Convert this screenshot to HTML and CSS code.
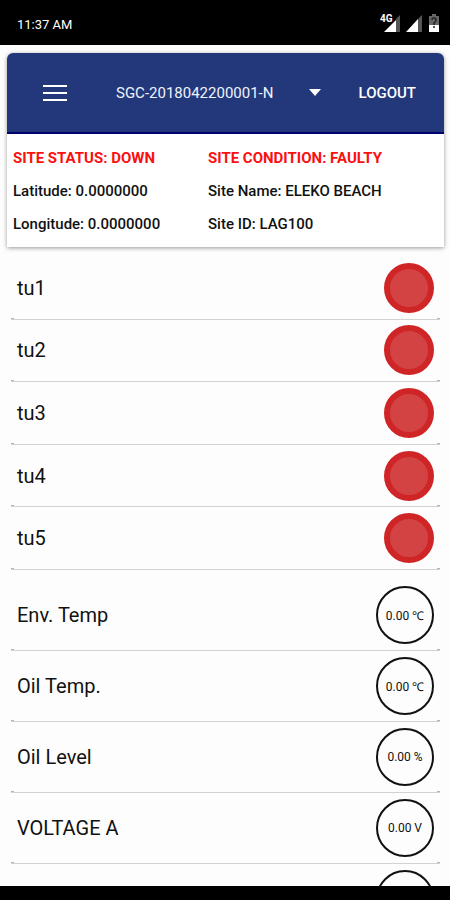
FILE: index.html
```html
<!DOCTYPE html>
<html lang="en">
<head>
    <meta charset="UTF-8">
    <meta name="viewport" content="width=device-width, initial-scale=1">
    <title>Site Monitor</title>
    <link rel="stylesheet" href="styles.css">
</head>
<body>

    <!-- status bar -->
    <div class="statusbar">
        <span class="clock">11:37 AM</span>
        <svg class="status-icons" width="62" height="22" viewBox="0 0 62 22" aria-hidden="true">
            <path d="M16 6L20 2V19H16Z" fill="#555"/>
            <path d="M4 19L16 7V19Z" fill="#fff"/>
            <text x="0" y="9" class="net">4G</text>
            <path d="M38 6L42 2V19H38Z" fill="#555"/>
            <path d="M26 19L38 6V19Z" fill="#fff"/>
            <path d="M49 3H52V1H56V3H59V13H49V3Z" fill="#666"/>
            <path d="M49 12H59V19H49Z" fill="#fff"/>
            <path d="M52 7Q52 5 54 5Q56 5 56 7Q56 8 54 10V12M54 13V15" fill="none" stroke="#222" stroke-width="1.5"/>
        </svg>
    </div>

    <!-- site card -->
    <header class="card">
        <div class="toolbar">
            <button type="button" class="menu" aria-label="Menu">
                <svg width="24" height="18" viewBox="0 0 24 18">
                    <path d="M0 2H24M0 9H24M0 16H24" stroke="#fff" stroke-width="2"/>
                </svg>
            </button>
            <div class="picker">
                <select class="site" aria-label="Site">
                    <option>SGC-2018042200001-N</option>
                </select>
                <svg class="arrow" width="12" height="7" viewBox="0 0 12 7" aria-hidden="true">
                    <path d="M0 0H12L6 7Z" fill="#fff"/>
                </svg>
            </div>
            <button type="button" class="logout">LOGOUT</button>
        </div>
        <div class="info">
            <span class="alert">SITE STATUS: DOWN</span>
            <span class="alert">SITE CONDITION: FAULTY</span>
            <span>Latitude: 0.0000000</span>
            <span>Site Name: ELEKO BEACH</span>
            <span>Longitude: 0.0000000</span>
            <span>Site ID: LAG100</span>
        </div>
    </header>

    <main class="content">
        <!-- on / off inputs -->
        <ul class="list inputs">
            <li>tu1 <span class="lamp"></span></li>
            <li>tu2 <span class="lamp"></span></li>
            <li>tu3 <span class="lamp"></span></li>
            <li>tu4 <span class="lamp"></span></li>
            <li>tu5 <span class="lamp"></span></li>
        </ul>

        <!-- measured values -->
        <ul class="list gauges">
            <li>Env. Temp <span class="gauge">0.00 ℃</span></li>
            <li>Oil Temp. <span class="gauge">0.00 ℃</span></li>
            <li>Oil Level <span class="gauge">0.00 %</span></li>
            <li>VOLTAGE A <span class="gauge">0.00 V</span></li>
            <li><span class="gauge"></span></li>
        </ul>
    </main>

    <div class="navbar"></div>

</body>
</html>
```
FILE: styles.css
```css
* {
    box-sizing: border-box;
}

body {
    margin: 0;
    height: 100vh;
    display: flex;
    flex-direction: column;
    overflow: hidden;
    background-color: #fdfdfd;
    color: #111;
    font-family: Roboto, "Liberation Sans", sans-serif;
}

/* status bar */
.statusbar {
    flex: none;
    height: 45px;
    padding: 3px 8px 0 17px;
    display: flex;
    align-items: center;
    justify-content: space-between;
    background-color: #000;
    color: #fff;
}
.clock {
    font-size: 13px;
}
.net {
    fill: #fff;
    font-size: 10px;
    font-weight: bold;
}

/* site card */
.card {
    flex: none;
    margin: 8px 6px 0 7px;
    border-radius: 6px 6px 0 0;
    background-color: #fff;
    box-shadow: 0 1px 4px rgba(0, 0, 0, 0.4);
}
.toolbar {
    height: 81px;
    padding: 0 28px 0 36px;
    display: flex;
    align-items: center;
    border-bottom: 2px solid #00006e;
    border-radius: 6px 6px 0 0;
    background-color: #22387b;
}
.toolbar button {
    padding: 0;
    border: 0;
    background: none;
    color: #fff;
    font-family: inherit;
}
.menu svg {
    display: block;
}
.picker {
    flex: 1;
    margin: 0 38px 0 49px;
    display: grid;
    align-items: center;
}
.site, .arrow {
    grid-area: 1 / 1;
}
.site {
    appearance: none;
    width: 100%;
    padding: 0;
    border: 0;
    background: none;
    color: #f0f3fc;
    font-family: inherit;
    font-size: 15px;
}
.arrow {
    justify-self: end;
    pointer-events: none;
}
.toolbar .logout {
    font-size: 15px;
    font-weight: 500;
}
.info {
    padding: 8px 6px 6px 6px;
    display: grid;
    grid-template-columns: 195px 1fr;
    font-size: 15px;
    font-weight: 500;
    line-height: 33px;
}
.alert {
    color: #fb1010;
    font-weight: bold;
}

/* lists */
.content {
    flex: 1;
    min-height: 0;
    padding: 10px 10px 0 11px;
    overflow: hidden;
}
.list {
    margin: 0 0 10px;
    padding: 0;
    display: grid;
    list-style: none;
    font-size: 20px;
}
/* divider with a small darker mark at both ends */
.list li {
    padding: 0 6px;
    display: flex;
    align-items: center;
    justify-content: space-between;
    border-bottom: 1px solid #d2d2d2;
    background:
        linear-gradient(#b5b5b5, #b5b5b5) left bottom / 3px 1px no-repeat,
        linear-gradient(#b5b5b5, #b5b5b5) right bottom / 3px 1px no-repeat;
}
.inputs {
    grid-auto-rows: 1fr;
    min-height: 313px;
}
.gauges {
    grid-auto-rows: 71px;
}
.lamp {
    width: 50px;
    height: 50px;
    border: 6px solid #cf2526;
    border-radius: 50%;
    background-color: #d34343;
}
.gauge {
    width: 58px;
    height: 58px;
    margin-left: auto;
    display: flex;
    align-items: center;
    justify-content: center;
    border: 2px solid #111;
    border-radius: 50%;
    font-size: 12px;
}

.navbar {
    flex: none;
    height: 14px;
    background-color: #000;
}
```
